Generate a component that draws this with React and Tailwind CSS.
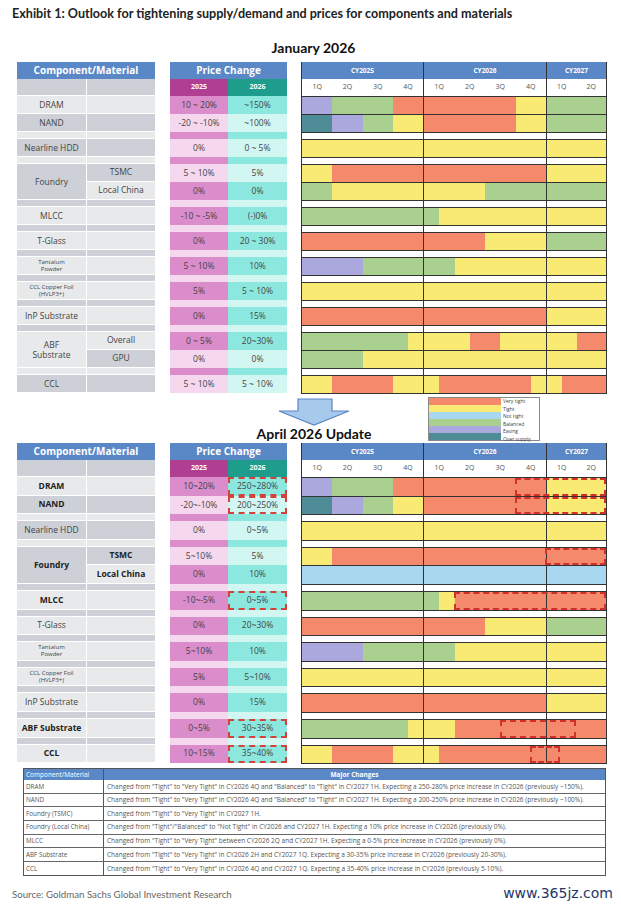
import React from "react";

const C = {
  r: "bg-[#f4896b]",
  y: "bg-[#f8ea73]",
  g: "bg-[#a9d08e]",
  l: "bg-[#aaa8dc]",
  t: "bg-[#4e8c98]",
  b: "bg-[#a9d7ef]",
};

const YEARS = [
  { label: "CY2025", from: 0, to: 4, w: "w-[122px]" },
  { label: "CY2026", from: 4, to: 8, w: "w-[123px]" },
  { label: "CY2027", from: 8, to: 10, w: "flex-1" },
];
const QUARTERS = ["1Q", "2Q", "3Q", "4Q", "1Q", "2Q", "3Q", "4Q", "1Q", "2Q"];

const ALL_Y = [[0, 10, "y"]];

const january = [
  { name: "DRAM", rows: [{ p25: "10 ~ 20%", p26: "~150%", bars: [[0, 1, "l"], [1, 3, "g"], [3, 7, "r"], [7, 8, "y"], [8, 10, "g"]] }] },
  { name: "NAND", rows: [{ p25: "-20 ~ -10%", p26: "~100%", bars: [[0, 1, "t"], [1, 2, "l"], [2, 3, "g"], [3, 4, "y"], [4, 7, "r"], [7, 8, "y"], [8, 10, "g"]] }] },
  "gap",
  { name: "Nearline HDD", rows: [{ p25: "0%", p26: "0 ~ 5%", bars: ALL_Y }] },
  "gap",
  {
    name: "Foundry",
    rows: [
      { sub: "TSMC", p25: "5 ~ 10%", p26: "5%", bars: [[0, 1, "y"], [1, 8, "r"], [8, 10, "y"]] },
      { sub: "Local China", p25: "0%", p26: "0%", bars: [[0, 1, "g"], [1, 6, "y"], [6, 10, "g"]] },
    ],
  },
  "gap",
  { name: "MLCC", rows: [{ p25: "-10 ~ -5%", p26: "(-)0%", bars: [[0, 4.5, "g"], [4.5, 10, "y"]] }] },
  "gap",
  { name: "T-Glass", rows: [{ p25: "0%", p26: "20 ~ 30%", bars: [[0, 6, "r"], [6, 8, "y"], [8, 10, "g"]] }] },
  "gap",
  { name: ["Tantalum", "Powder"], small: true, rows: [{ p25: "5 ~ 10%", p26: "10%", bars: [[0, 2, "l"], [2, 5, "g"], [5, 10, "y"]] }] },
  "gap",
  { name: ["CCL Copper Foil", "(HVLP3+)"], small: true, rows: [{ p25: "5%", p26: "5 ~ 10%", bars: ALL_Y }] },
  "gap",
  { name: "InP Substrate", rows: [{ p25: "0%", p26: "15%", bars: [[0, 8, "r"], [8, 10, "y"]] }] },
  "gap",
  {
    name: ["ABF", "Substrate"],
    rows: [
      { sub: "Overall", p25: "0 ~ 5%", p26: "20~30%", bars: [[0, 3.5, "g"], [3.5, 5.5, "y"], [5.5, 6.5, "r"], [6.5, 9, "y"], [9, 10, "r"]] },
      { sub: "GPU", p25: "0%", p26: "0%", bars: [[0, 2, "g"], [2, 10, "y"]] },
    ],
  },
  "gap",
  { name: "CCL", rows: [{ p25: "5 ~ 10%", p26: "5 ~ 10%", bars: [[0, 1, "y"], [1, 3, "r"], [3, 4.5, "y"], [4.5, 7.5, "r"], [7.5, 8.5, "y"], [8.5, 10, "r"]] }] },
];

const april = [
  { name: "DRAM", bold: true, rows: [{ p25: "10~20%", p26: "250~280%", mark: true, box: [7, 10], bars: [[0, 1, "l"], [1, 3, "g"], [3, 8, "r"], [8, 10, "y"]] }] },
  { name: "NAND", bold: true, rows: [{ p25: "-20~-10%", p26: "200~250%", mark: true, box: [7, 10], bars: [[0, 1, "t"], [1, 2, "l"], [2, 3, "g"], [3, 4, "y"], [4, 8, "r"], [8, 10, "y"]] }] },
  "gap",
  { name: "Nearline HDD", rows: [{ p25: "0%", p26: "0~5%", bars: ALL_Y }] },
  "gap",
  {
    name: "Foundry",
    bold: true,
    rows: [
      { sub: "TSMC", p25: "5~10%", p26: "5%", box: [8, 10], bars: [[0, 1, "y"], [1, 10, "r"]] },
      { sub: "Local China", p25: "0%", p26: "10%", bars: [[0, 10, "b"]] },
    ],
  },
  "gap",
  { name: "MLCC", bold: true, rows: [{ p25: "-10~-5%", p26: "0~5%", mark: true, box: [5, 10], bars: [[0, 4.5, "g"], [4.5, 5, "y"], [5, 10, "r"]] }] },
  "gap",
  { name: "T-Glass", rows: [{ p25: "0%", p26: "20~30%", bars: [[0, 6, "r"], [6, 8, "y"], [8, 10, "g"]] }] },
  "gap",
  { name: ["Tantalum", "Powder"], small: true, rows: [{ p25: "5~10%", p26: "10%", bars: [[0, 2, "l"], [2, 5, "g"], [5, 10, "y"]] }] },
  "gap",
  { name: ["CCL Copper Foil", "(HVLP3+)"], small: true, rows: [{ p25: "5%", p26: "5~10%", bars: ALL_Y }] },
  "gap",
  { name: "InP Substrate", rows: [{ p25: "0%", p26: "15%", bars: [[0, 8, "r"], [8, 10, "y"]] }] },
  "gap",
  { name: "ABF Substrate", bold: true, rows: [{ p25: "0~5%", p26: "30~35%", mark: true, box: [6.5, 9], bars: [[0, 3.5, "g"], [3.5, 5, "y"], [5, 10, "r"]] }] },
  "gap",
  { name: "CCL", bold: true, rows: [{ p25: "10~15%", p26: "35~40%", mark: true, box: [7.5, 8.5], bars: [[0, 1, "y"], [1, 3, "r"], [3, 4.5, "y"], [4.5, 10, "r"]] }] },
];

const changes = [
  ["DRAM", "Changed from \"Tight\" to \"Very Tight\" in CY2026 4Q and \"Balanced\" to \"Tight\" in CY2027 1H. Expecting a 250-280% price increase in CY2026 (previously ~150%)."],
  ["NAND", "Changed from \"Tight\" to \"Very Tight\" in CY2026 4Q and \"Balanced\" to \"Tight\" in CY2027 1H. Expecting a 200-250% price increase in CY2026 (previously ~100%)."],
  ["Foundry (TSMC)", "Changed from \"Tight\" to \"Very Tight\" in CY2027 1H."],
  ["Foundry (Local China)", "Changed from \"Tight\"/\"Balanced\" to \"Not Tight\" in CY2026 and CY2027 1H. Expecting a 10% price increase in CY2026 (previously 0%)."],
  ["MLCC", "Changed from \"Tight\" to \"Very Tight\" between CY2026 2Q and CY2027 1H. Expecting a 0-5% price increase in CY2026 (previously 0%)."],
  ["ABF Substrate", "Changed from \"Tight\" to \"Very Tight\" in CY2026 2H and CY2027 1Q. Expecting a 30-35% price increase in CY2026 (previously 20-30%)."],
  ["CCL", "Changed from \"Tight\" to \"Very Tight\" in CY2026 4Q and CY2027 1Q. Expecting a 35-40% price increase in CY2026 (previously 5-10%)."],
];

const legend = [
  ["r", "Very tight"],
  ["y", "Tight"],
  ["b", "Not tight"],
  ["g", "Balanced"],
  ["l", "Easing"],
  ["t", "Over supply"],
];

const compShade = (i) => (i % 2 === 0 ? "bg-[#cdd1d7]" : "bg-[#e8e9eb]");
const p25Shade = (i) => (i % 2 === 1 ? "bg-[#da8ccb]" : "bg-[#f6d8ee]");
const p26Shade = (i) => (i % 2 === 1 ? "bg-[#8ce8df]" : "bg-[#d2f6f2]");

function flatten(groups) {
  const out = [];
  groups.forEach((g) => {
    if (g === "gap") out.push({ gap: true });
    else g.rows.forEach((r) => out.push(r));
  });
  return out;
}

function Name({ name, small, bold }) {
  const lines = Array.isArray(name) ? name : [name];
  return (
    <div className={`text-center ${small ? "text-[6px] leading-[7px]" : "text-[8.5px] leading-[10px]"} ${bold ? "font-bold text-[#222]" : "text-[#444]"}`}>
      {lines.map((l) => (
        <div key={l}>{l}</div>
      ))}
    </div>
  );
}

function ComponentTable({ groups, rh }) {
  let i = 1;
  return (
    <div className="w-[138px]">
      <div className="flex h-[17px] items-center justify-center bg-[#5a88c6] text-[10px] font-bold text-white">Component/Material</div>
      <div className="flex h-[17px] border-b border-white">
        <div className="w-[70px] border-r border-white bg-[#cdd1d7]" />
        <div className="flex-1 bg-[#cdd1d7]" />
      </div>
      {groups.map((g, k) => {
        if (g === "gap") {
          const s = compShade(i++);
          return (
            <div key={k} className="flex h-[7px] border-b border-white">
              <div className={`w-[70px] border-r border-white ${s}`} />
              <div className={`flex-1 ${s}`} />
            </div>
          );
        }
        const start = i;
        i += g.rows.length;
        return (
          <div key={k} className="flex">
            <div className={`flex w-[70px] items-center justify-center border-r border-b border-white ${compShade(start)}`}>
              <Name name={g.name} small={g.small} bold={g.bold} />
            </div>
            <div className="flex flex-1 flex-col">
              {g.rows.map((r, j) => (
                <div key={j} className={`flex ${rh} items-center justify-center border-b border-white text-[8.5px] ${g.bold ? "font-bold text-[#222]" : "text-[#444]"} ${compShade(start + j)}`}>
                  {r.sub}
                </div>
              ))}
            </div>
          </div>
        );
      })}
    </div>
  );
}

function PriceTable({ groups, rh }) {
  const rows = flatten(groups);
  return (
    <div className="w-[117px]">
      <div className="flex h-[17px] items-center justify-center bg-[#5a88c6] text-[10px] font-bold text-white">Price Change</div>
      <div className="flex h-[17px] text-[7px] font-bold text-white">
        <div className="flex w-[58px] items-center justify-center bg-[#b03f92]">2025</div>
        <div className="flex flex-1 items-center justify-center bg-[#1e9c8c]">2026</div>
      </div>
      {rows.map((r, k) => {
        const idx = k + 1;
        if (r.gap)
          return (
            <div key={k} className="flex h-[7px]">
              <div className={`w-[58px] ${p25Shade(idx)}`} />
              <div className={`flex-1 ${p26Shade(idx)}`} />
            </div>
          );
        return (
          <div key={k} className={`flex ${rh} text-[8.5px] text-[#444]`}>
            <div className={`flex w-[58px] items-center justify-center ${p25Shade(idx)}`}>{r.p25}</div>
            <div className={`flex flex-1 items-center justify-center ${p26Shade(idx)}`}>
              {r.mark ? (
                <div className="flex h-full w-full items-center justify-center border-2 border-dashed border-[#d2413a]">{r.p26}</div>
              ) : (
                r.p26
              )}
            </div>
          </div>
        );
      })}
    </div>
  );
}

function YearBlocks({ bars }) {
  return (
    <div className="flex h-full">
      {YEARS.map((y, n) => {
        const len = y.to - y.from;
        const segs = (bars || [])
          .map(([s, e, c]) => [Math.max(s, y.from), Math.min(e, y.to), c])
          .filter(([s, e]) => e > s);
        return (
          <div key={y.label} className={`flex h-full ${y.w} ${n < 2 ? "border-r border-[#333]" : ""}`}>
            {segs.map(([s, e, c], j) => (
              <div key={j} className={`h-full ${C[c]}`} style={{ width: `${((e - s) / len) * 100}%` }} />
            ))}
          </div>
        );
      })}
    </div>
  );
}

function Gantt({ groups, rh }) {
  const rows = flatten(groups);
  return (
    <div className="w-[306px] border-x border-b border-[#333]">
      <div className="flex h-[17px] bg-[#5a88c6] text-[6.5px] font-bold text-white">
        {YEARS.map((y, n) => (
          <div key={y.label} className={`flex items-center justify-center ${y.w} ${n < 2 ? "border-r border-[#333]" : ""}`}>
            {y.label}
          </div>
        ))}
      </div>
      <div className="flex h-[17px] text-[7px] text-[#555]">
        {YEARS.map((y, n) => (
          <div key={y.label} className={`flex ${y.w} ${n < 2 ? "border-r border-[#333]" : ""}`}>
            {QUARTERS.slice(y.from, y.to).map((q, j) => (
              <div key={j} className="flex flex-1 items-center justify-center">
                {q}
              </div>
            ))}
          </div>
        ))}
      </div>
      {rows.map((r, k) => (
        <div key={k} className={`relative border-t border-[#333] ${r.gap ? "h-[7px] bg-white" : rh}`}>
          <YearBlocks bars={r.bars} />
          {r.box ? (
            <div
              className="absolute top-0 bottom-0 border-2 border-dashed border-[#d2312b]"
              style={{ left: `${r.box[0] * 10}%`, width: `${(r.box[1] - r.box[0]) * 10}%` }}
            />
          ) : null}
        </div>
      ))}
    </div>
  );
}

function Block({ groups, rh }) {
  return (
    <div className="flex pl-[17px]">
      <ComponentTable groups={groups} rh={rh} />
      <div className="ml-[15px]">
        <PriceTable groups={groups} rh={rh} />
      </div>
      <div className="ml-[14px]">
        <Gantt groups={groups} rh={rh} />
      </div>
    </div>
  );
}

export default function App() {
  return (
    <div className="h-[905px] w-[621px] overflow-hidden bg-white font-['Open_Sans',sans-serif] text-[#333]">
      <div className="pl-[12px] pt-[6px] font-['Lato',sans-serif] text-[12.6px] leading-[16px] font-bold whitespace-nowrap text-[#222]">
        Exhibit 1: Outlook for tightening supply/demand and prices for components and materials
      </div>
      <div className="mt-[17px] h-[18px] text-center font-['Lato',sans-serif] text-[14px] leading-[18px] font-bold text-[#111]">
        <span className="ml-[6px]">January 2026</span>
      </div>

      <div className="mt-[5px]">
        <Block groups={january} rh="h-[18px]" />
      </div>

      <div className="flex h-[49px]">
        <div className="ml-[254px] flex w-[120px] flex-col items-center">
          <svg width="72" height="28" viewBox="0 0 72 28" className="mt-[4px]">
            <polygon points="20,1 54,1 54,13 71,13 36,27 1,13 20,13" fill="#a7c9ec" stroke="#5b86c2" strokeWidth="1.2" />
          </svg>
          <div className="font-['Lato',sans-serif] text-[14px] leading-[16px] font-bold whitespace-nowrap text-[#111]">April 2026 Update</div>
        </div>
        <div className="mt-[3px] ml-[54px] flex h-[44px] w-[112px] border border-[#8a8a8a] bg-white">
          <div className="flex w-[72px] flex-col">
            {legend.map(([c]) => (
              <div key={c} className={`flex-1 ${C[c]}`} />
            ))}
          </div>
          <div className="flex flex-1 flex-col pl-[2px] text-[5px] text-[#444]">
            {legend.map(([c, t]) => (
              <div key={c} className="flex flex-1 items-center">
                {t}
              </div>
            ))}
          </div>
        </div>
      </div>

      <Block groups={april} rh="h-[18.6px]" />

      <div className="mt-[4px] ml-[23px] w-[583px] border border-[#555]">
        <div className="flex h-[11px] bg-[#5a88c6] text-[6.5px] text-white">
          <div className="flex w-[80px] items-center border-r border-[#555] pl-[2px] whitespace-nowrap">Component/Material</div>
          <div className="flex flex-1 items-center justify-center font-bold">Major Changes</div>
        </div>
        {changes.map(([c, t], k) => (
          <div key={c} className={`flex h-[13.6px] text-[#555] ${k < changes.length - 1 ? "border-b border-[#666]" : ""}`}>
            <div className="flex w-[80px] items-center border-r border-[#555] pl-[2px] text-[6.3px] whitespace-nowrap">{c}</div>
            <div className="flex flex-1 items-center overflow-hidden pl-[3px] text-[6.5px] whitespace-nowrap">{t}</div>
          </div>
        ))}
      </div>

      <div className="mt-[7px] flex items-center justify-between pr-[8px] pl-[12px]">
        <div className="font-['Lato',sans-serif] text-[9.7px] text-[#666]">Source: Goldman Sachs Global Investment Research</div>
        <div className="font-['DejaVu_Sans',sans-serif] text-[14px] text-[#23376b]">www.365jz.com</div>
      </div>
    </div>
  );
}
